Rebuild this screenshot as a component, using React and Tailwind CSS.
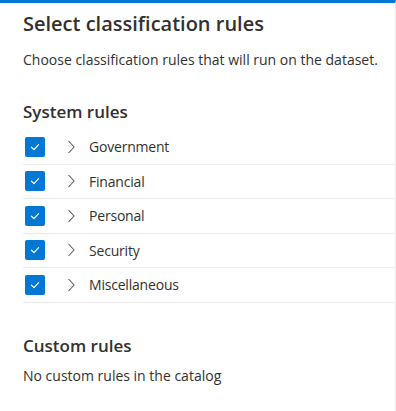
import React from 'react';

const rules = ['Government', 'Financial', 'Personal', 'Security', 'Miscellaneous'];

function Checkbox() {
  return (
    <div className="flex h-[20px] w-[20px] items-center justify-center rounded-[2px] bg-[#0078d4]">
      <svg width="12" height="12" viewBox="0 0 12 12" fill="none">
        <path d="M2.5 6.2 L5 8.6 L9.6 3.6" stroke="white" strokeWidth="1.2" strokeLinecap="round" strokeLinejoin="round" />
      </svg>
    </div>
  );
}

function Chevron() {
  return (
    <svg width="10" height="16" viewBox="0 0 10 16" fill="none">
      <path d="M2.5 2 L8 8 L2.5 14" stroke="#605e5c" strokeWidth="1.1" />
    </svg>
  );
}

export default function App() {
  return (
    <div
      className="h-[411px] w-[396px] overflow-hidden border-t-[3px] border-r border-t-[#0078d4] border-r-[#edebe9] bg-white pl-[23px] text-[#323130]"
      style={{ fontFamily: '"Open Sans", "Noto Sans", sans-serif' }}
    >
      <h1 className="pt-[7px] text-[20px] leading-[28px] font-semibold">Select classification rules</h1>
      <p className="mt-[12px] text-[14px] leading-[20px]">
        Choose classification rules that will run on the dataset.
      </p>

      <h2 className="mt-[30px] text-[17px] leading-[24px] font-semibold">System rules</h2>
      <ul className="mt-[6px]">
        {rules.map((rule) => (
          <li key={rule} className="flex h-[34.5px] items-center border-b border-[#edebe9]">
            <div className="pl-[2px]">
              <Checkbox />
            </div>
            <div className="ml-[21px]">
              <Chevron />
            </div>
            <span className="ml-[13px] text-[14px] tracking-[-0.2px]">{rule}</span>
          </li>
        ))}
      </ul>

      <h2 className="mt-[31px] text-[17px] leading-[24px] font-semibold">Custom rules</h2>
      <p className="mt-[8px] text-[14px] leading-[20px]">No custom rules in the catalog</p>
    </div>
  );
}
